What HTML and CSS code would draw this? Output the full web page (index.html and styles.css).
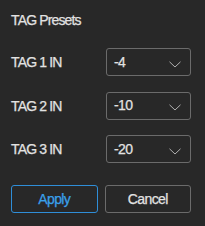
FILE: index.html
```html
<!DOCTYPE html>
<html>
<head>
<meta charset="utf-8">
<link rel="stylesheet" href="styles.css">
</head>
<body>
<div class="panel">
  <div class="title">TAG Presets</div>
  <div class="rows">
    <div class="row">
      <span class="label">TAG 1 IN</span>
      <div class="select"><span class="value">-4</span><svg class="chev" width="12" height="7" viewBox="0 0 12 7"><path d="M0.5 0.8 L6 6 L11.5 0.8" fill="none" stroke="#b0b0b0" stroke-width="1"/></svg></div>
    </div>
    <div class="row">
      <span class="label">TAG 2 IN</span>
      <div class="select"><span class="value">-10</span><svg class="chev" width="12" height="7" viewBox="0 0 12 7"><path d="M0.5 0.8 L6 6 L11.5 0.8" fill="none" stroke="#b0b0b0" stroke-width="1"/></svg></div>
    </div>
    <div class="row">
      <span class="label">TAG 3 IN</span>
      <div class="select"><span class="value">-20</span><svg class="chev" width="12" height="7" viewBox="0 0 12 7"><path d="M0.5 0.8 L6 6 L11.5 0.8" fill="none" stroke="#b0b0b0" stroke-width="1"/></svg></div>
    </div>
  </div>
  <div class="buttons">
    <button class="btn apply">Apply</button>
    <button class="btn cancel">Cancel</button>
  </div>
</div>
</body>
</html>
```
FILE: styles.css
```css
html, body {
  margin: 0;
  padding: 0;
  background: #282828;
}
body {
  width: 205px;
  height: 226px;
  font-family: "Liberation Sans", Arial, sans-serif;
  font-size: 14px;
  color: #e2e2e2;
  -webkit-text-stroke: 0.25px currentColor;
}
.panel {
  padding: 12px 14px 0 11px;
}
.title {
  line-height: 16px;
  letter-spacing: -0.85px;
}
.rows {
  display: flex;
  flex-direction: column;
  gap: 15.5px;
  margin-top: 20px;
}
.row {
  display: flex;
  align-items: center;
  justify-content: space-between;
  height: 28px;
}
.label {
  letter-spacing: -0.85px;
}
.select {
  box-sizing: border-box;
  width: 85px;
  height: 28px;
  border: 1px solid #6b6b6b;
  border-radius: 3px;
  display: flex;
  align-items: center;
  justify-content: space-between;
  padding: 0 9px 0 7px;
}
.value {
  letter-spacing: -0.6px;
  margin-top: -1px;
}
.chev {
  margin-top: 4px;
}
.buttons {
  display: grid;
  grid-template-columns: 1fr 1fr;
  gap: 7px;
  margin-top: 21.5px;
}
.btn {
  box-sizing: border-box;
  height: 28px;
  background: transparent;
  border-radius: 3px;
  font-family: "Liberation Sans", Arial, sans-serif;
  font-size: 14px;
  letter-spacing: -0.6px;
  padding: 0;
  -webkit-text-stroke: 0.25px currentColor;
}
.apply {
  border: 1px solid #2f8ed8;
  color: #3aa0ea;
}
.cancel {
  border: 1px solid #6b6b6b;
  color: #e2e2e2;
}
```
